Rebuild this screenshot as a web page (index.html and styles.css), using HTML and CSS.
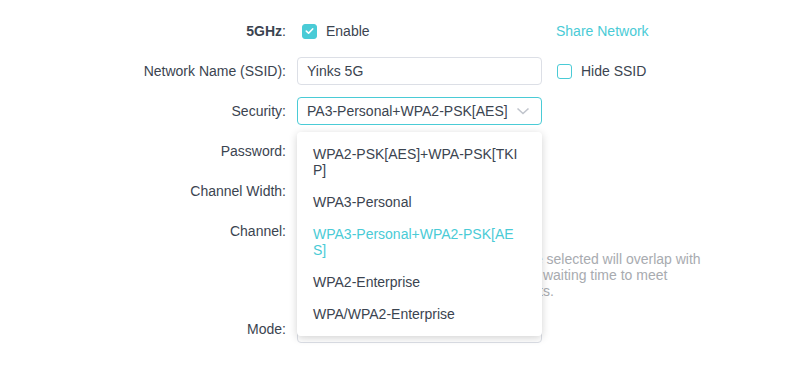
FILE: index.html
```html
<!DOCTYPE html>
<html lang="en">
<head>
    <meta charset="UTF-8">
    <meta name="viewport" content="width=device-width, initial-scale=1.0">
    <title>Wireless Settings - 5GHz</title>
    <link rel="stylesheet" href="styles.css">
</head>
<body>
    <form class="wireless">
        <div class="row">
            <label class="label"><b>5GHz</b>:</label>
            <div class="control">
                <span class="check checked">
                    <svg viewBox="0 0 14 14" width="14" height="14"><path d="M3.6 7.2 L6 9.4 L10.4 4.8" fill="none" stroke="#fff" stroke-width="1.8" stroke-linecap="round" stroke-linejoin="round"/></svg>
                </span>
                <span class="check-text">Enable</span>
            </div>
            <a class="extra link">Share Network</a>
        </div>

        <div class="row">
            <label class="label">Network Name (SSID):</label>
            <div class="control">
                <div class="input">Yinks 5G</div>
            </div>
            <div class="extra">
                <span class="check"></span>
                <span class="check-text">Hide SSID</span>
            </div>
        </div>

        <div class="row">
            <label class="label">Security:</label>
            <div class="control">
                <div class="input select open">
                    <span class="value">PA3-Personal+WPA2-PSK[AES]</span>
                    <svg class="arrow" viewBox="0 0 16 16" width="16" height="16"><path d="M2.5 5.5 L8 10.5 L13.5 5.5" fill="none" stroke="#c0c4cc" stroke-width="1.6"/></svg>
                </div>
                <ul class="dropdown">
                    <li>WPA2-PSK[AES]+WPA-PSK[TKIP]</li>
                    <li>WPA3-Personal</li>
                    <li class="selected">WPA3-Personal+WPA2-PSK[AES]</li>
                    <li>WPA2-Enterprise</li>
                    <li>WPA/WPA2-Enterprise</li>
                </ul>
            </div>
        </div>

        <div class="row">
            <label class="label">Password:</label>
            <div class="control"><div class="input">12345678</div></div>
        </div>

        <div class="row">
            <label class="label">Channel Width:</label>
            <div class="control"><div class="input select">Auto</div></div>
        </div>

        <div class="row">
            <label class="label">Channel:</label>
            <div class="control"><div class="input select">Auto</div></div>
        </div>

        <p class="hint">Note: The 160MHz bandwidth you have selected will overlap with<br>DFS channels, which may increase the waiting time to meet<br>specific regulatory wireless requirements.</p>

        <div class="row">
            <label class="label">Mode:</label>
            <div class="control"><div class="input select">802.11a/n/ac/ax mixed</div></div>
        </div>
    </form>
</body>
</html>
```

FILE: styles.css
```css
body {
    margin: 0;
    font-family: "Liberation Sans", Arial, sans-serif;
    font-size: 14px;
    color: #3b4450;
    background: #fff;
}
.wireless {
    padding-top: 17px;
}
.row {
    display: grid;
    grid-template-columns: 286px 245px auto;
    column-gap: 11px;
    align-items: center;
    height: 28px;
    margin-bottom: 12px;
}
.label {
    text-align: right;
    line-height: 16px;
}
.label b {
    font-weight: bold;
}
.control {
    position: relative;
    display: flex;
    align-items: center;
    height: 28px;
}
.extra {
    display: flex;
    align-items: center;
    margin-left: 3px;
}
.link {
    color: #4acbd6;
    text-decoration: none;
}
.check {
    box-sizing: border-box;
    width: 15px;
    height: 15px;
    border: 1.5px solid #4acbd6;
    border-radius: 3px;
    background: #fff;
    display: inline-flex;
    align-items: center;
    justify-content: center;
    margin-left: 1px;
}
.check.checked {
    background: #4acbd6;
    margin-left: 5px;
}
.check-text {
    margin-left: 9px;
}
.input {
    box-sizing: border-box;
    width: 245px;
    height: 28px;
    border: 1px solid #dcdfe6;
    border-radius: 4px;
    padding: 0 9px;
    display: flex;
    align-items: center;
}
.select.open {
    border-color: #4acbd6;
    justify-content: space-between;
    padding-right: 10px;
}
.arrow {
    flex: none;
}
.dropdown {
    position: absolute;
    top: 35px;
    left: 0;
    z-index: 10;
    box-sizing: border-box;
    width: 245px;
    margin: 0;
    padding: 6px 0;
    list-style: none;
    background: #fff;
    border-radius: 4px;
    box-shadow: 0 2px 8px rgba(0, 0, 0, 0.18);
}
.dropdown li {
    padding: 8px 16px;
    line-height: 16px;
    word-break: break-all;
}
.dropdown .selected {
    color: #4acbd6;
}
.hint {
    margin: -6px 0 16px 297px;
    line-height: 16px;
    white-space: nowrap;
    color: #a8abb0;
}
```
